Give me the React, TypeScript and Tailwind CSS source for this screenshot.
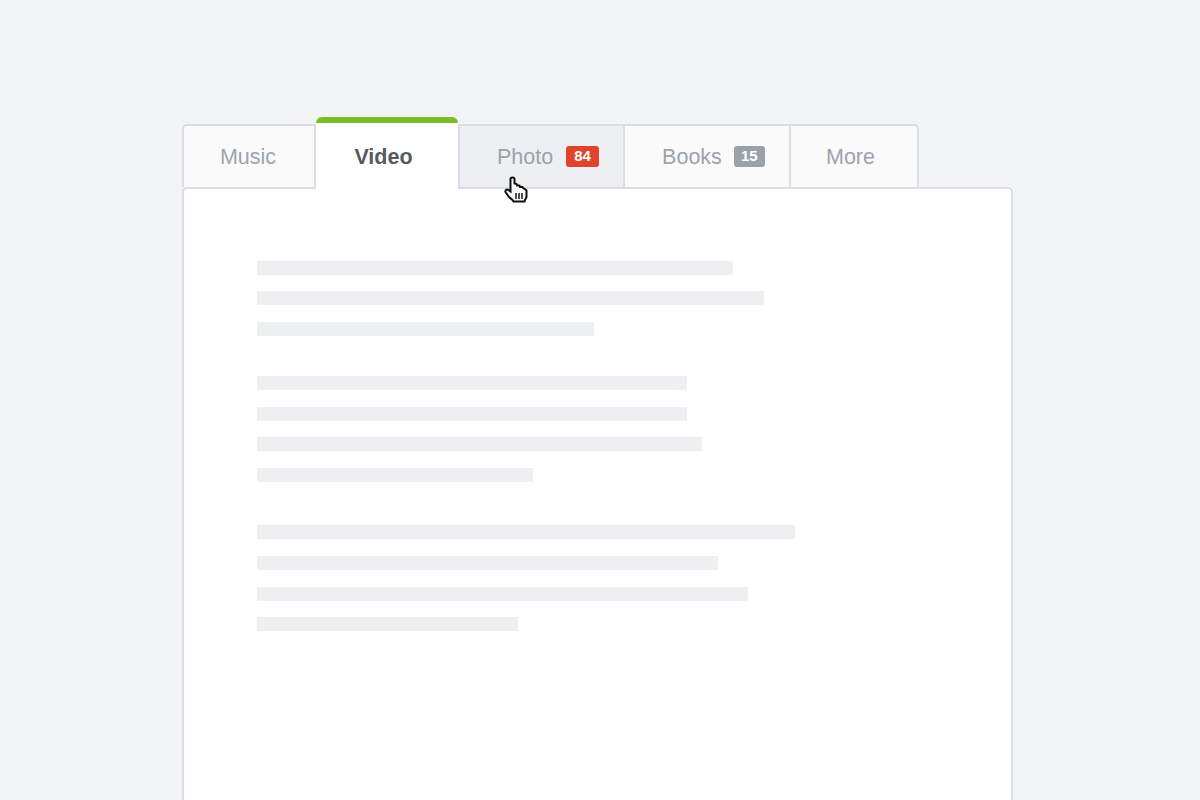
const para1 = [476, 507, 337];
const para2 = [430, 430, 445, 276];
const para3 = [538, 461, 491, 261];

function Para({ widths, className }: { widths: number[]; className?: string }) {
  return (
    <div className={"flex flex-col gap-[16.6px] " + (className ?? "")}>
      {widths.map((w, i) => (
        <div key={i} className="h-[14px] bg-[#eeeff0]" style={{ width: w }} />
      ))}
    </div>
  );
}

function Hand() {
  return (
    <svg width="24" height="28" viewBox="0 0 24 28" className="absolute left-[504px] top-[176px]">
      <path
        d="M6.5 3 C6.5 1 10.5 1 10.5 3 L10.5 7.5 L12.5 8 L13 9.5 L15.5 9.5 L16 11 L18.5 11 L19.5 12.5 L21 13 L22.5 14.5 L22.5 21 L21 24 L20.5 25.5 L9.5 25.5 L8.5 24 L5 21 L1.5 16 C1 14.2 2.8 12.8 4.5 14 L6.5 15.5 Z"
        fill="#fff"
        stroke="#111"
        strokeWidth="2"
        strokeLinejoin="miter"
      />
      <path d="M12 17 V23 M15 17 V23 M18 17 V23" stroke="#222" strokeWidth="1.6" fill="none" />
    </svg>
  );
}

export default function App() {
  const tabBase =
    "flex items-center justify-center h-[63px] pt-[1px] border-t-2 border-r-2 border-[#dadee4] text-[21.5px] text-[#9aa3ae]";
  return (
    <div className="relative h-[800px] overflow-hidden bg-[#f3f4f6] pl-[182px] pt-[117px] font-['Liberation_Sans',Arial,sans-serif]">
      <div className="flex h-[70px] items-end">
        <div className={tabBase + " w-[134px] rounded-tl-[5px] border-l-2 bg-[#fafafa]"}>
          <span className="-ml-[2px]">Music</span>
        </div>
        <div className="relative z-10 -mb-[2px] flex h-[72px] w-[142px] items-center justify-center rounded-t-[6px] border-t-[6px] border-[#7cbf24] bg-white pt-[3px] text-[21.5px] font-bold text-[#555a61]">
          <span className="-ml-[7px]">Video</span>
        </div>
        <div className={tabBase + " w-[167px] gap-[13px] border-l-2 bg-[#eeeff2]"}>
          <span className="ml-[13px]">Photo</span>
          <span className="-mt-[2px] flex h-[21px] w-[33px] items-center justify-center rounded-[3px] bg-[#e2432c] text-[15px] font-bold text-white">84</span>
        </div>
        <div className={tabBase + " w-[166px] gap-[12px] bg-[#fafafa]"}>
          <span className="ml-[13px]">Books</span>
          <span className="-mt-[2px] flex h-[21px] w-[31px] items-center justify-center rounded-[3px] bg-[#99a1ab] text-[15px] font-bold text-white">15</span>
        </div>
        <div className={tabBase + " w-[128px] rounded-tr-[5px] bg-[#fafafa]"}>
          <span className="-ml-[7px]">More</span>
        </div>
      </div>
      <div className="relative h-[700px] w-[831px] rounded-t-[5px] border-2 border-[#dadee4] bg-white pl-[73px] pt-[71.6px]">
        <Para widths={para1} />
        <Para widths={para2} className="mt-[40.2px]" />
        <Para widths={para3} className="mt-[43.6px]" />
      </div>
      <Hand />
    </div>
  );
}
